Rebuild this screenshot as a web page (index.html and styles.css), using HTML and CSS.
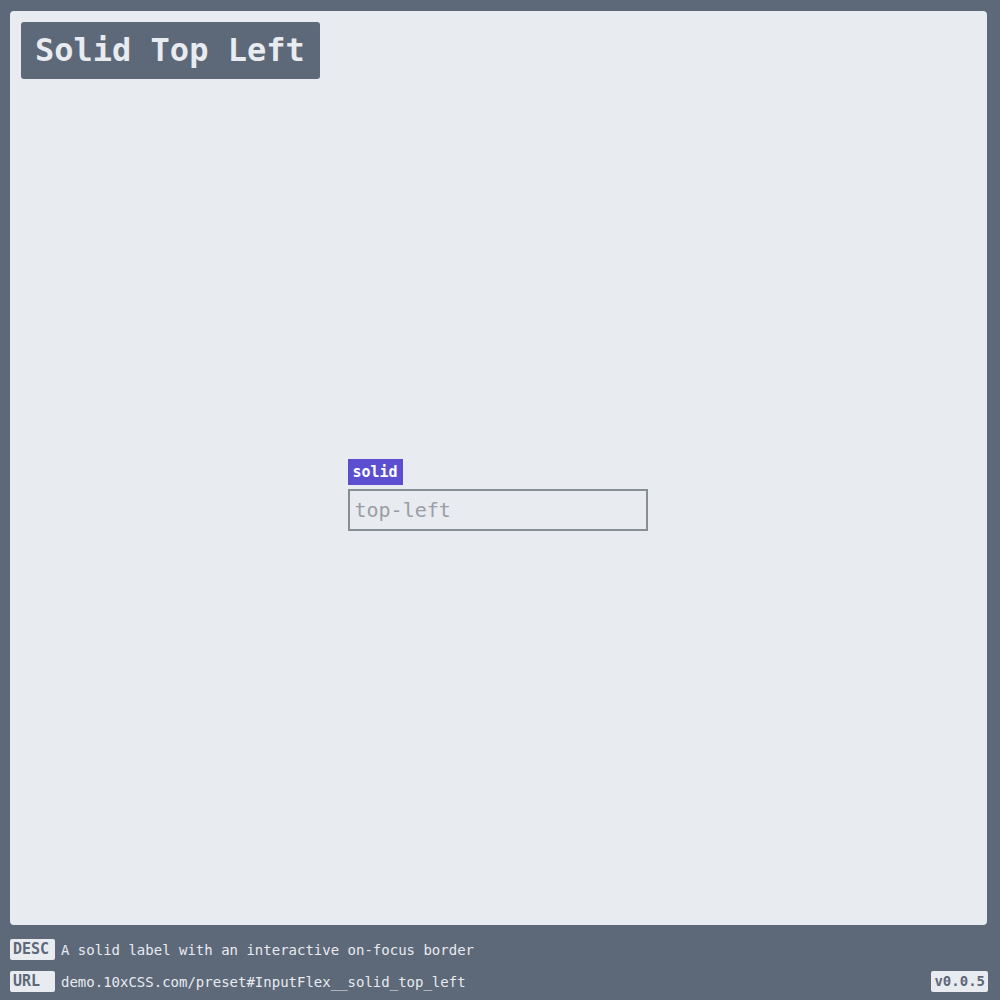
FILE: index.html
```html
<!DOCTYPE html>
<html>
<head>
<meta charset="utf-8">
<link rel="stylesheet" href="styles.css">
</head>
<body>
<div class="page">
  <main class="panel">
    <h1 class="title">Solid Top Left</h1>
    <div class="stage">
      <div class="field">
        <label class="label" for="inp">solid</label>
        <input id="inp" class="input" type="text" placeholder="top-left">
      </div>
    </div>
  </main>
  <footer class="footer">
    <div class="row">
      <span class="badge">DESC</span>
      <span class="text">A solid label with an interactive on-focus border</span>
    </div>
    <div class="row">
      <span class="badge">URL</span>
      <span class="text">demo.10xCSS.com/preset#InputFlex__solid_top_left</span>
      <span class="badge version">v0.0.5</span>
    </div>
  </footer>
</div>
</body>
</html>
```

FILE: styles.css
```css
html, body {
  margin: 0;
  padding: 0;
}
body {
  background: #5d6879;
  font-family: "DejaVu Sans Mono", "Liberation Mono", monospace;
  width: 1000px;
  height: 1000px;
  overflow: hidden;
}
.page {
  display: flex;
  flex-direction: column;
  padding: 11px 13px 0 10px;
  height: 1000px;
  box-sizing: border-box;
}
.panel {
  background: #e8ebf0;
  border-radius: 4px;
  height: 914px;
  box-sizing: border-box;
  padding: 11px 11px;
  display: flex;
  flex-direction: column;
}
.title {
  margin: 0;
  align-self: flex-start;
  background: #5d6879;
  color: #e8ebf0;
  font-size: 32px;
  font-weight: bold;
  line-height: 57px;
  height: 57px;
  padding: 0 15px 0 14px;
  border-radius: 3px;
}
.stage {
  flex: 1;
  display: flex;
  justify-content: center;
  padding-top: 380px;
  padding-right: 2px;
}
.field {
  display: flex;
  flex-direction: column;
  align-items: flex-start;
  gap: 4px;
}
.label {
  background: #5b4fcf;
  color: #ffffff;
  font-weight: bold;
  font-size: 15px;
  height: 26px;
  line-height: 27px;
  padding: 0 5px;
}
.input {
  width: 300px;
  height: 42px;
  box-sizing: border-box;
  border: 2px solid #868e96;
  background: transparent;
  font-family: "DejaVu Sans Mono", "Liberation Mono", monospace;
  font-size: 20px;
  padding: 0 5px;
  color: #333;
  outline: none;
}
.input::placeholder {
  color: #9a9ea4;
}
.footer {
  display: flex;
  flex-direction: column;
  gap: 11px;
  padding-top: 14px;
  margin-right: -1px;
}
.row {
  display: flex;
  align-items: center;
  gap: 6px;
  height: 21px;
}
.badge {
  background: #e8ebf0;
  color: #5d6879;
  font-weight: bold;
  font-size: 15px;
  line-height: 21px;
  height: 21px;
  min-width: 45px;
  box-sizing: border-box;
  padding: 0 3px;
  border-radius: 2px;
}
.text {
  color: #e8ebf0;
  font-size: 14px;
}
.version {
  margin-left: auto;
  min-width: 0;
  font-size: 14px;
}
```
